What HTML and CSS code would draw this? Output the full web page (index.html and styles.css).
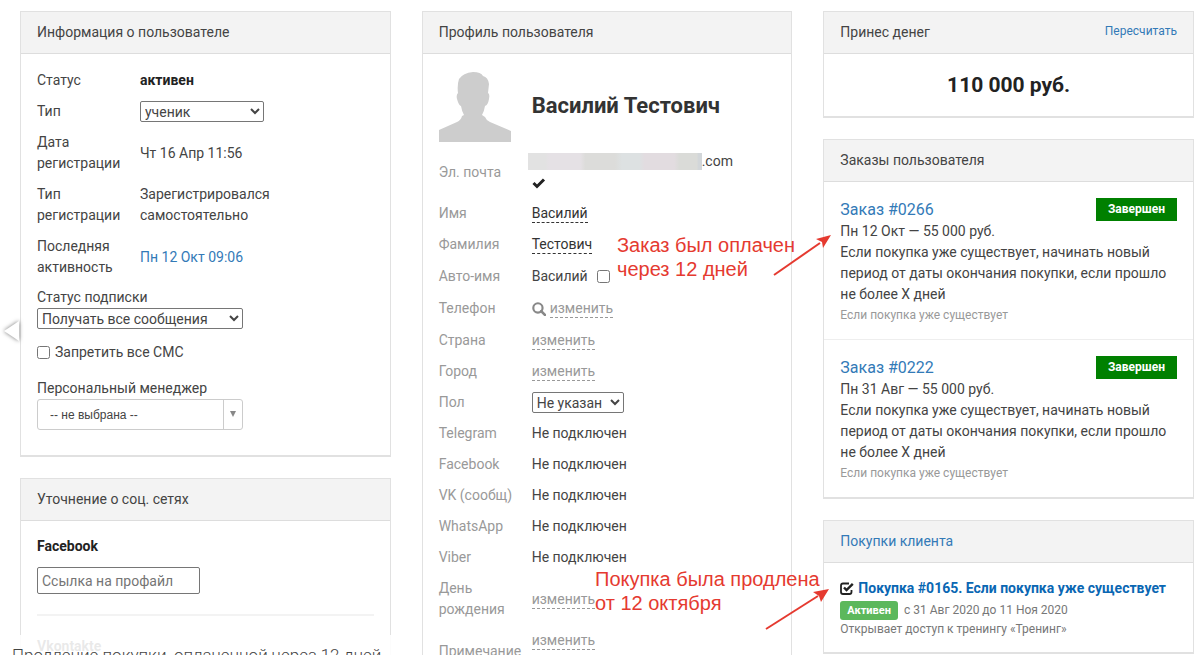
FILE: index.html
```html
<!DOCTYPE html>
<html lang="ru">
<head>
<meta charset="utf-8">
<title>Карточка пользователя</title>
<link rel="stylesheet" href="styles.css">
</head>
<body>
<main class="board">
  <div class="column">
    <section class="panel">
      <h2 class="panel-head">Информация о пользователе</h2>
      <div class="panel-body">
        <table class="fields info">
          <tr><th scope="row">Статус</th><td><b>активен</b></td></tr>
          <tr><th scope="row"><label for="type">Тип</label></th><td><select id="type" class="select type-select"><option>ученик</option></select></td></tr>
          <tr><th scope="row">Дата регистрации</th><td>Чт 16 Апр 11:56</td></tr>
          <tr><th scope="row">Тип регистрации</th><td>Зарегистрировался<br>самостоятельно</td></tr>
          <tr><th scope="row">Последняя активность</th><td><a href="#">Пн 12 Окт 09:06</a></td></tr>
        </table>
        <div class="form">
          <div class="stack">
            <label for="subscription">Статус подписки</label>
            <select id="subscription" class="select wide-select"><option>Получать все сообщения</option></select>
          </div>
          <label class="check"><input type="checkbox" class="box"> Запретить все СМС</label>
          <div class="stack manager">
            <label for="manager">Персональный менеджер</label>
            <div class="picker">
              <select id="manager" class="picker-select"><option>-- не выбрана --</option></select>
              <svg class="picker-arrow" viewBox="0 0 6 6" aria-hidden="true"><path d="M0 0h6L3 6z" fill="#888"/></svg>
            </div>
          </div>
        </div>
      </div>
    </section>
    <section class="panel">
      <h2 class="panel-head">Уточнение о соц. сетях</h2>
      <div class="panel-body social">
        <label class="social-name" for="fb">Facebook</label>
        <input id="fb" class="social-input" type="text" placeholder="Ссылка на профайл">
        <hr class="rule">
        <label class="social-name" for="vk">Vkontakte</label>
        <input id="vk" class="social-input" type="text" placeholder="Ссылка на профайл">
      </div>
    </section>
  </div>

  <div class="column">
    <section class="panel">
      <h2 class="panel-head">Профиль пользователя</h2>
      <div class="panel-body">
        <div class="person">
          <svg class="avatar" viewBox="0 0 72 70" aria-hidden="true"><path fill="#cdcdcd" d="M0 70V58L18 50Q22 48 23 44L25 43Q23 40 22 34Q20 34 18 27Q17 23 19 21Q18 13 20 7Q24 1 34 0Q42 0 44 4Q49 5 50 12L49 21Q51 22 50 27Q49 33 46 34Q45 40 43 43L46 45Q47 48 51 50L72 59V70Z"/></svg>
          <h1 class="person-name">Василий Тестович</h1>
        </div>
        <table class="fields profile">
          <tr><th scope="row">Эл. почта</th><td><div class="mail"><span class="mask"></span>.com</div><div class="confirmed"><svg class="tick" viewBox="0 0 14 12" role="img" aria-label="подтверждена"><path d="M1.500 6l3.500 3.500 7-7" fill="none" stroke="#222" stroke-width="3"/></svg></div></td></tr>
          <tr><th scope="row">Имя</th><td><a class="edit set" href="#">Василий</a></td></tr>
          <tr><th scope="row">Фамилия</th><td><a class="edit set" href="#">Тестович</a></td></tr>
          <tr class="auto-row"><th scope="row"><label for="auto">Авто-имя</label></th><td><span class="auto">Василий <input id="auto" type="checkbox" class="box"></span></td></tr>
          <tr class="phone"><th scope="row">Телефон</th><td><span class="search"><svg class="lens" viewBox="0 0 13 13" aria-hidden="true"><circle cx="5.500" cy="5.500" r="4.300" fill="none" stroke="#888" stroke-width="2"/><path d="M8.500 8.500L12 12" stroke="#888" stroke-width="2.500" stroke-linecap="round"/></svg><a class="edit" href="#">изменить</a></span></td></tr>
          <tr><th scope="row">Страна</th><td><a class="edit" href="#">изменить</a></td></tr>
          <tr><th scope="row">Город</th><td><a class="edit" href="#">изменить</a></td></tr>
          <tr><th scope="row"><label for="sex">Пол</label></th><td><select id="sex" class="select sex-select"><option>Не указан</option></select></td></tr>
          <tr><th scope="row">Telegram</th><td>Не подключен</td></tr>
          <tr><th scope="row">Facebook</th><td>Не подключен</td></tr>
          <tr><th scope="row">VK (сообщ)</th><td>Не подключен</td></tr>
          <tr><th scope="row">WhatsApp</th><td>Не подключен</td></tr>
          <tr><th scope="row">Viber</th><td>Не подключен</td></tr>
          <tr><th scope="row">День рождения</th><td><a class="edit" href="#">изменить</a></td></tr>
          <tr class="note"><th scope="row">Примечание</th><td><a class="edit" href="#">изменить</a></td></tr>
        </table>
      </div>
    </section>
  </div>

  <div class="column">
    <section class="panel">
      <div class="panel-head split"><h2 class="head-title">Принес денег</h2><a class="recount" href="#">Пересчитать</a></div>
      <p class="money">110 000 руб.</p>
    </section>
    <section class="panel">
      <h2 class="panel-head">Заказы пользователя</h2>
      <article class="order">
        <div class="order-top"><a class="order-title" href="#">Заказ #0266</a><span class="badge">Завершен</span></div>
        <p>Пн 12 Окт — 55 000 руб.</p>
        <p>Если покупка уже существует, начинать новый период от даты окончания покупки, если прошло не более X дней</p>
        <p class="small">Если покупка уже существует</p>
      </article>
      <article class="order">
        <div class="order-top"><a class="order-title" href="#">Заказ #0222</a><span class="badge">Завершен</span></div>
        <p>Пн 31 Авг — 55 000 руб.</p>
        <p>Если покупка уже существует, начинать новый период от даты окончания покупки, если прошло не более X дней</p>
        <p class="small">Если покупка уже существует</p>
      </article>
    </section>
    <section class="panel">
      <h2 class="panel-head"><a href="#">Покупки клиента</a></h2>
      <article class="purchase">
        <div class="purchase-top">
          <svg class="done" viewBox="0 0 14 13" aria-hidden="true"><path d="M9 1.500H3Q1 1.500 1 3.500V10Q1 12 3 12H9.500Q11.500 12 11.500 10V8" fill="none" stroke="#222" stroke-width="1.800"/><path d="M4 5.500L6.500 8 12.800 1.800" fill="none" stroke="#222" stroke-width="2.400"/></svg>
          <a class="purchase-title" href="#">Покупка #0165. Если покупка уже существует</a>
        </div>
        <div class="purchase-dates"><span class="active">Активен</span><span>с 31 Авг 2020 до 11 Ноя 2020</span></div>
        <p class="opens">Открывает доступ к тренингу «Тренинг»</p>
      </article>
    </section>
  </div>
</main>

<button class="prev" aria-label="Назад"><svg class="prev-icon" viewBox="0 0 20 26" aria-hidden="true"><path d="M17 3v20L2 13z" fill="#fff"/></svg></button>
<p class="callout paid">Заказ был оплачен<br>через 12 дней</p>
<p class="callout extended">Покупка была продлена<br>от 12 октября</p>
<svg class="arrow arrow-paid" viewBox="0 0 60 44" aria-hidden="true"><path d="M2 42L48 10" stroke="#e53a30" stroke-width="2"/><path d="M59 2L51 15 50 9 44 6z" fill="#e53a30"/></svg>
<svg class="arrow arrow-extended" viewBox="0 0 66 44" aria-hidden="true"><path d="M2 42L54 9" stroke="#e53a30" stroke-width="2"/><path d="M65 2L57 15 55 9 49 5z" fill="#e53a30"/></svg>
<p class="caption">Продление покупки, оплаченной через 12 дней</p>
</body>
</html>
```
FILE: styles.css
```css
* { box-sizing: border-box; }
body {
  position: relative;
  height: 100vh;
  margin: 0;
  overflow: hidden;
  background: #fff;
  color: #444;
  font: 14px/21px Roboto, "Open Sans", sans-serif;
}
p, h1, h2 { margin: 0; }
a { color: #337ab7; text-decoration: none; }
b { color: #222; }
select, input { font: inherit; color: #444; }

.board {
  display: grid;
  grid-template-columns: repeat(3, minmax(0, 1fr));
  align-items: start;
  gap: 31px;
  padding: 11px 3px 0 20px;
}
.column { display: flex; flex-direction: column; gap: 21px; }
.panel { border: 1px solid #e1e1e1; border-bottom-width: 2px; }
.panel-head {
  padding: 10px 16px;
  border-bottom: 1px solid #ddd;
  background: #f3f3f3;
  font-size: 14px;
  font-weight: 400;
  line-height: 21px;
}
.head-title { font-size: 14px; font-weight: 400; }
.split { display: flex; justify-content: space-between; }
.recount { font-size: 12px; line-height: 18px; }
.panel-body { padding: 11px 16px 25px; }

.fields { width: 100%; border-collapse: collapse; table-layout: fixed; }
.fields th { padding: 5px 0; font-weight: 400; text-align: left; }
.fields td { padding: 5px 0; }
.info th { width: 103px; padding-right: 16px; }
.profile th { width: 93px; color: #999; }
.select {
  display: block;
  height: 21px;
  padding: 0;
  border: 1px solid #767676;
  border-radius: 2px;
  background-color: #fff;
}
.type-select { width: 124px; }
.wide-select { width: 206px; }
.sex-select { width: 92px; }
.box { width: 13px; height: 13px; margin: 0; }

.form { display: flex; flex-direction: column; gap: 13px; padding-top: 4px; }
.stack { display: flex; flex-direction: column; }
.check { display: flex; align-items: center; gap: 5px; }
.manager { padding-top: 2px; }
.picker { position: relative; width: 206px; }
.picker-select {
  width: 100%;
  height: 31px;
  padding: 0 12px;
  border: 1px solid #ccc;
  border-radius: 3px;
  appearance: none;
  background: linear-gradient(#ccc, #ccc) right 18px top / 1px 100% no-repeat #fff;
  font: 12px "Liberation Sans", sans-serif;
}
.picker-arrow { position: absolute; top: 12px; right: 7px; width: 6px; height: 6px; }

.social { display: flex; flex-direction: column; align-items: flex-start; padding-top: 15px; }
.social-name { color: #222; font-weight: 700; }
.social-input {
  width: 163px;
  height: 27px;
  margin-top: 10px;
  padding: 0 4px;
  border: 1px solid #767676;
  border-radius: 2px;
}
.rule { width: 100%; margin: 20px 0; border: 0; border-top: 2px solid #f3f3f3; }

.person { display: flex; align-items: center; gap: 21px; padding: 7px 0 4px; }
.avatar { width: 72px; height: 70px; }
.person-name { padding-bottom: 3px; color: #333; font-size: 22px; line-height: 28px; }
.mail { display: flex; align-items: center; margin-left: -4px; }
.mask {
  width: 174px;
  height: 17px;
  background: linear-gradient(90deg, #e2e2e2 10%, #e5e1e5 12% 30%, #dcdcda 33% 50%, #dde1e2 54% 64%, #e2dce0 67% 84%, #dadbd8 87% 97%, #d2d6d9 98%);
}
.confirmed { display: flex; align-items: center; height: 21px; }
.tick { width: 14px; height: 12px; }
.edit { padding-bottom: 1px; border-bottom: 1px dashed #999; color: #999; }
.set { border-color: #333; color: #333; }
.auto { display: flex; align-items: center; gap: 9px; }
.search { display: flex; align-items: center; gap: 4px; line-height: 16px; }
.lens { width: 14px; height: 14px; }
.auto-row th, .auto-row td { padding-top: 6px; }
.phone th, .phone td { padding: 6px 0; }
.note td { padding-bottom: 26px; }

.money { padding: 18px 0; color: #222; font-size: 21px; font-weight: 700; line-height: 26px; text-align: center; }
.order { padding: 16px 16px 14px; }
.order + .order { border-top: 1px solid #eee; }
.order-top { display: flex; justify-content: space-between; height: 23px; }
.order-title { font-size: 16px; line-height: 23px; }
.badge { width: 81px; background: #008000; color: #fff; font-size: 12px; font-weight: 700; line-height: 23px; text-align: center; }
.small { color: #999; font-size: 12px; line-height: 20px; }
.purchase { padding: 15px 16px 14px; }
.purchase-top { display: flex; align-items: center; gap: 4px; }
.done { width: 14px; height: 13px; }
.purchase-title { color: #0a67b3; font-weight: 700; white-space: nowrap; }
.purchase-dates { display: flex; align-items: center; gap: 6px; padding-top: 1px; color: #777; font-size: 12px; line-height: 20px; }
.active { padding: 0 7px; border-radius: 3px; background: #5cb85c; color: #fff; font-size: 11px; font-weight: 700; line-height: 19px; }
.opens { color: #777; font-size: 12px; line-height: 18px; }

.prev { position: absolute; top: 318px; left: 2px; padding: 0; border: 0; background: none; }
.prev-icon { display: block; width: 20px; height: 26px; overflow: visible; filter: drop-shadow(0 0 2px #777); }
.callout { position: absolute; color: #e53a30; font: 20px/24px "Liberation Sans", sans-serif; white-space: nowrap; }
.paid { top: 233px; left: 617px; }
.extended { top: 567px; left: 595px; }
.arrow { position: absolute; height: 44px; }
.arrow-paid { top: 233px; left: 772px; width: 60px; }
.arrow-extended { top: 587px; left: 764px; width: 66px; }
.caption {
  position: absolute;
  top: 635px;
  left: 0;
  width: 410px;
  padding: 10px 12px;
  background: rgba(255, 255, 255, 0.9);
  font-size: 17px;
  font-weight: 300;
  white-space: nowrap;
}
```
